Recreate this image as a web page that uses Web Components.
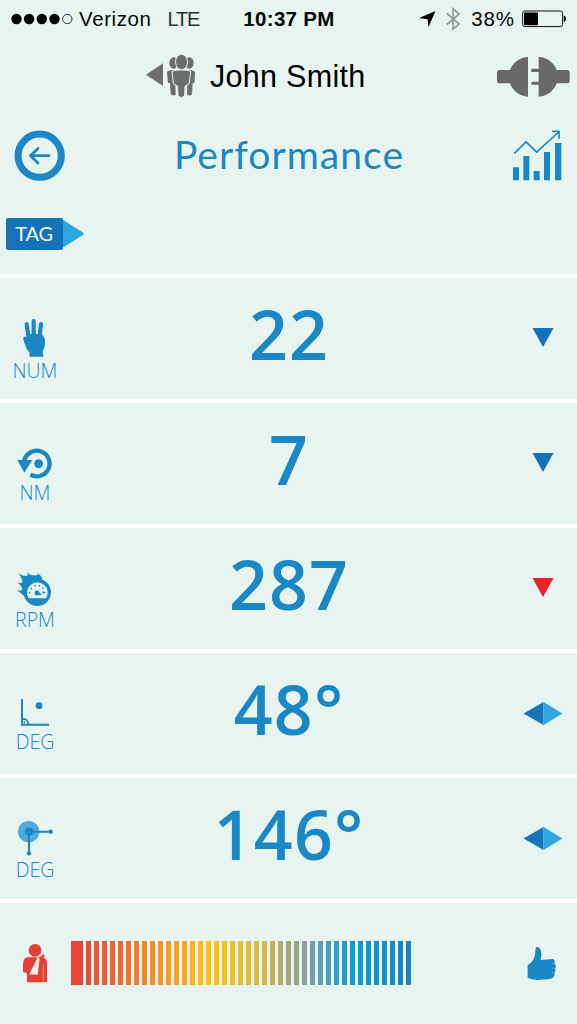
<!DOCTYPE html>
<html lang="en">

<head>
    <meta charset="utf-8">
    <meta name="viewport" content="width=device-width, initial-scale=1">
    <title>Performance</title>
</head>

<style>
    body {
        margin: 0;
        background: #e8f4f0;
    }
</style>

<body>
    <performance-screen>
        <status-bar slot="status" carrier="Verizon" network="LTE" time="10:37 PM" battery="38%"></status-bar>
        <user-bar slot="user">John Smith</user-bar>
        <title-bar slot="title">Performance</title-bar>
        <tag-bar slot="tag">TAG</tag-bar>

        <metric-row icon="hand" trend="down" unit="NUM" style="--unit-y: 0px">22</metric-row>
        <metric-row icon="torque" trend="down" unit="NM" style="--unit-y: -3px">7</metric-row>
        <metric-row icon="speed" trend="alert" unit="RPM" style="--unit-y: -1px">287</metric-row>
        <metric-row icon="angle" trend="steady" unit="DEG" style="--unit-y: -4px">48°</metric-row>
        <metric-row icon="joint" trend="steady" unit="DEG" style="--unit-y: -1px">146°</metric-row>

        <health-scale slot="scale" bars="41"></health-scale>
    </performance-screen>
</body>

<!-- Screen -->
<template id="performance-screen-template">
    <style>
        :host {
            display: flex;
            flex-direction: column;
            box-sizing: border-box;
            width: 577px;
            height: 1024px;
            overflow: hidden;
            background: #e8f4f0;
            color: #1a87c7;
            font-family: Lato, "Liberation Sans", sans-serif;
        }
    </style>
    <slot name="status"></slot>
    <slot name="user"></slot>
    <slot name="title"></slot>
    <slot name="tag"></slot>
    <slot></slot>
    <slot name="scale"></slot>
</template>

<!-- Phone status bar -->
<template id="status-bar-template">
    <style>
        :host {
            display: grid;
            grid-template-columns: 1fr auto 1fr;
            align-items: center;
            height: 38px;
            padding: 0 10px 0 11px;
            color: #050808;
            font: 20.5px/38px "Liberation Sans", sans-serif;
        }

        .left, .right {
            display: flex;
            align-items: center;
        }

        .right {
            justify-content: flex-end;
        }

        .network {
            margin-left: 16px;
            font-size: 20px;
            letter-spacing: -1.2px;
            color: #2b3231;
        }

        .carrier {
            margin-left: 6px;
            letter-spacing: 0.6px;
        }

        .time {
            font-weight: bold;
            letter-spacing: 0.3px;
        }

        .battery {
            margin: 0 7px 0 10px;
            letter-spacing: 0.9px;
        }

        svg {
            display: block;
        }
    </style>
    <div class="left">
        <svg width="62" height="12" viewBox="0 0 62 12">
            <circle cx="5.5" cy="6" r="5.2" />
            <circle cx="18.1" cy="6" r="5.2" />
            <circle cx="30.8" cy="6" r="5.2" />
            <circle cx="43.5" cy="6" r="5.2" />
            <circle cx="56.3" cy="6" r="4.7" fill="none" stroke="#222" stroke-width="0.9" />
        </svg>
        <span class="carrier"></span>
        <span class="network"></span>
    </div>
    <span class="time"></span>
    <div class="right">
        <svg width="17" height="18" viewBox="0 0 17 18">
            <path d="M16.5 1 L9.5 17 L8.5 9.3 L0 8 Z" />
        </svg>
        <svg width="16" height="24" viewBox="0 0 16 24" style="margin-left: 9px">
            <path d="M2 6.5 L14 17 L8 22.2 V1.8 L14 7 L2 17.5" fill="none" stroke="#919c9a" stroke-width="1.7" />
        </svg>
        <span class="battery"></span>
        <svg width="45" height="18" viewBox="0 0 45 18">
            <rect x="0.6" y="1" width="40" height="15.6" rx="2.2" fill="none" stroke="#111" stroke-width="1" />
            <rect x="2" y="2.4" width="14" height="12.8" rx="0.8" />
            <path d="M41.8 5.5 Q44 6 44 8.8 Q44 11.6 41.8 12 Z" />
        </svg>
    </div>
</template>

<!-- User picker and device connection -->
<template id="user-bar-template">
    <style>
        :host {
            display: flex;
            align-items: center;
            height: 77px;
            padding: 0 7px 0 146px;
            color: #000;
            font: 30.5px/77px "Liberation Sans", sans-serif;
        }

        .name {
            flex: 1;
            margin-left: 14px;
            letter-spacing: 0.3px;
        }

        svg {
            display: block;
            fill: #6d6e70;
            margin-top: -2px;
        }

        .plug {
            fill: #69686a;
            margin-top: 1px;
        }
    </style>
    <svg width="50" height="44" viewBox="438 160 150 132">
        <path d="M438 222 L489 188 V256 Z" />
        <!-- the two people behind -->
        <ellipse cx="521" cy="187" rx="13" ry="17" />
        <ellipse cx="568" cy="187" rx="13" ry="17" />
        <path d="M501 213 Q510 206 525 209 L527 282 Q519 287 512 281 L510 248 Q503 248 503 240 Z" />
        <path d="M585 213 Q576 206 563 209 L561 282 Q569 287 576 281 L578 248 Q584 248 584 240 Z" />
        <g stroke="#e8f4f0" stroke-width="3">
            <ellipse cx="544.500" cy="184" rx="18" ry="23" />
            <path d="M516 212 Q527 207 544 208 Q561 207 572 212 L568 247 Q566 254 560 253 L555 257 L554 286 Q544 295 534 286 L533 257 L528 253 Q522 254 520 247 Z" />
        </g>
    </svg>
    <span class="name"><slot></slot></span>
    <svg class="plug" width="73" height="40" viewBox="631 173 219 120">
        <path d="M724 173 V292 A60 60 0 0 1 670 252 H639 Q631 252 631 244 V220 Q631 212 639 212 H670 A60 60 0 0 1 724 173 Z" />
        <path d="M756 173 V292 A60 60 0 0 0 810 252 H841 Q849 252 849 244 V220 Q849 212 841 212 H810 A60 60 0 0 0 756 173 Z" />
        <path d="M735 208.500 H758 V218 H735 Q732 213 735 208.500 Z M735 247 H758 V256.500 H735 Q732 252 735 247 Z" />
    </svg>
</template>

<!-- Page title -->
<template id="title-bar-template">
    <style>
        :host {
            display: flex;
            align-items: center;
            justify-content: space-between;
            height: 80px;
            padding: 0 15px 0 14px;
            font-size: 39px;
            line-height: 78px;
            letter-spacing: 1.05px;
        }

        span {
            height: 80px;
        }

        svg {
            display: block;
            overflow: visible;
        }
    </style>
    <svg width="51" height="51" viewBox="0 0 51 51" fill="none" stroke="#1a87c7">
        <circle cx="25.700" cy="25.700" r="21.600" stroke-width="7" />
        <path d="M35 25.700 H16.500 M24 18.500 L16.500 25.700 L24 33" stroke-width="2.800" stroke-linecap="round" stroke-linejoin="round" />
    </svg>
    <span><slot></slot></span>
    <svg width="49" height="51" viewBox="678 43 147 153" fill="#1a87c7">
        <path d="M678 155 H696 V194 H678 Z M709 121 H727 V194 H709 Z M740 166 H758 V194 H740 Z M771 109 H789 V194 H771 Z M804 82 H823 V194 H804 Z" />
        <path d="M682 113 L717 79 L749 109 L815 49 M795 47 H816 V69" fill="none" stroke="#1a87c7" stroke-width="5" />
    </svg>
</template>

<!-- Tag button -->
<template id="tag-bar-template">
    <style>
        :host {
            display: flex;
            align-items: center;
            height: 79px;
            padding-left: 6px;
        }

        .tag {
            width: 56px;
            height: 32px;
            padding-right: 1px;
            border-radius: 2px;
            background: #1673ba;
            color: #f3fbfd;
            font-size: 20px;
            line-height: 31px;
            letter-spacing: -0.2px;
            text-align: center;
        }

        svg {
            display: block;
        }
    </style>
    <div class="tag"><slot></slot></div>
    <svg width="21" height="28" viewBox="0 0 21 28">
        <path d="M0 0 L20 12.500 Q21.500 13.800 20 15 L0 27.500 Z" fill="#2ca8e1" />
    </svg>
</template>

<!-- One measured value -->
<template id="metric-row-template">
    <style>
        :host {
            display: grid;
            grid-template-columns: 70px 1fr 69px;
            box-sizing: border-box;
            height: 125.1px;
            border-top: 4px solid #fff;
        }

        .kind {
            display: flex;
            flex-direction: column;
            align-items: center;
            padding-top: 36px;
        }

        .unit {
            margin-top: var(--unit-y, 0);
            font-family: "Open Sans", Lato, sans-serif;
            font-weight: 300;
            font-size: 19.5px;
            line-height: 18px;
        }

        .value {
            padding-top: 6px;
            font-family: "Open Sans", Lato, sans-serif;
            font-size: 68px;
            line-height: 100px;
            font-weight: 650;
            letter-spacing: 1.2px;
            text-align: center;
        }

        .trend {
            display: flex;
            justify-content: center;
            align-items: flex-start;
            padding-top: 48px;
        }
    </style>
    <div class="kind">
        <metric-icon></metric-icon>
        <span class="unit"></span>
    </div>
    <div class="value"><slot></slot></div>
    <div class="trend"></div>
</template>

<!-- Red to blue scale -->
<template id="health-scale-template">
    <style>
        :host {
            display: flex;
            align-items: center;
            box-sizing: border-box;
            height: 125px;
            border-top: 4px solid #fff;
            padding: 0 20px 0 23px;
        }

        .bars {
            display: flex;
            flex: 1;
            gap: 2.7px;
            height: 44px;
            margin-left: 24px;
        }

        .bars i {
            width: 5.32px;
        }

        .bars i:first-child {
            width: 12px;
        }

        svg {
            display: block;
        }
    </style>
    <svg width="24" height="39" viewBox="69 403 72 117" fill="#e83f35">
        <circle cx="105" cy="422" r="19" />
        <path d="M82 443 H128 Q141 446 141 462 V518 H81 V491 L69 486 V462 Q70 446 82 443 Z" />
        <path d="M88 494 L113 443 L119 447 L113 495 Z" fill="#f5efeb" />
        <path d="M130 462 V518" stroke="#f0b5ae" stroke-width="2" />
        <path d="M118 447 L132 434 M121 442 L134 440" stroke="#e83f35" stroke-width="4" />
    </svg>
    <div class="bars"></div>
    <svg width="30" height="35" viewBox="984 467 90 105" fill="#1a87c7">
        <path d="M986 525 Q1002 515 1007 498 Q1009 488 1010 474 Q1013 467 1021 472 Q1028 480 1027 496 L1025 509 L1060 506 Q1069 508 1067 520 Q1073 526 1068 534 Q1072 541 1067 547 Q1069 555 1063 560 Q1060 566 1045 567 L1015 569 Q1000 568 986 563 Z" />
        <path d="M1060 520 H1068 M1061 534 H1069 M1060 547 H1068" stroke="#9fcae0" stroke-width="1.500" />
    </svg>
</template>

<script>
    const BLUE = "#1a87c7"

    // All drawn on a 210 x 144 grid, shown at a third of that
    const ICONS = {
        hand: `
            <path d="M80 30 L86 74 M101 21 V72 M123 30 L118 74" stroke="${BLUE}" stroke-width="12.500" stroke-linecap="round" />
            <path d="M80 60 H124 Q137 70 135 88 Q135 102 128 112 L130 128 H89 L88 115 Q78 106 75 91 Q68 76 71 69 Q76 66 79 70 Z" />`,
        torque: `
            <path d="M73 64 A38.500 38.500 0 1 1 91 107" fill="none" stroke="${BLUE}" stroke-width="13" />
            <path d="M52 63 H97 L73 101 Z" />
            <circle cx="116" cy="74" r="13.500" />`,
        speed: `
            <path d="M51 22 C60 33 68 36 80 36 Q87 32 79 23 Q90 35 108 34 Q118 33 110 26 Q126 33 128 50 L110 70 L80 108 Q70 90 49 78 Q58 82 66 79 Q70 68 50 54 Q58 59 66 56 Q70 46 51 22 Z" />
            <circle cx="112" cy="85" r="41" />
            <path d="M86 103 A31 31 0 1 1 138 103 Z" fill="#e8f4f0" />
            <circle cx="89" cy="86" r="2.500" />
            <circle cx="94" cy="74" r="2.500" />
            <circle cx="105" cy="65" r="2.500" />
            <circle cx="118" cy="65" r="2.500" />
            <circle cx="129" cy="73" r="2.500" />
            <circle cx="111" cy="87" r="7.500" />
            <path d="M108 80 L128 92 L111 93 Z M127 82 L138 85 L129 90 Z" />`,
        angle: `
            <path d="M66 30 V107 H147" fill="none" stroke="${BLUE}" stroke-width="6" />
            <path d="M66 90 Q85 88 85 107" fill="none" stroke="${BLUE}" stroke-width="5" />
            <circle cx="73" cy="100" r="3" />
            <circle cx="117" cy="50" r="10" />`,
        joint: `
            <circle cx="86" cy="53" r="32" fill="#55a8dc" />
            <circle cx="87" cy="53" r="13" />
            <path d="M87 118 V53 H152" fill="none" stroke="${BLUE}" stroke-width="6" />
            <circle cx="152" cy="53" r="6.500" />
            <circle cx="87" cy="118" r="6.500" />`,
    }

    const TRENDS = {
        down: `<svg width="22" height="24" viewBox="0 0 22 24"><path d="M0.500 2 H21.500 L11 21 Z" fill="#1272b9" /></svg>`,
        alert: `<svg width="22" height="24" viewBox="0 0 22 24"><path d="M0.500 2 H21.500 L11 21 Z" fill="#ee2026" /></svg>`,
        steady: `<svg width="40" height="24" viewBox="0 0 40 24">
            <path d="M0.500 12.500 L20.500 1 V24 Z" fill="#1975b9" />
            <path d="M39.500 12.500 L20.500 1 V24 Z" fill="#2fa6dc" />
        </svg>`,
    }

    // [bar index, r, g, b]
    const SCALE_STOPS = [
        [0, 233, 68, 55],
        [7, 241, 124, 43],
        [12, 249, 164, 33],
        [16, 253, 193, 16],
        [20, 234, 190, 40],
        [23, 214, 184, 68],
        [26, 163, 167, 124],
        [28, 140, 160, 160],
        [31, 76, 158, 190],
        [34, 12, 153, 215],
        [37, 12, 148, 214],
        [41, 27, 130, 196],
    ]

    function scaleColor(i) {
        const n = SCALE_STOPS.findIndex((s) => s[0] >= i)
        if (n <= 0) return `rgb(${SCALE_STOPS[0].slice(1)})`
        const a = SCALE_STOPS[n - 1]
        const b = SCALE_STOPS[n]
        const t = (i - a[0]) / (b[0] - a[0])
        return `rgb(${[1, 2, 3].map((k) => Math.round(a[k] + (b[k] - a[k]) * t))})`
    }

    class TemplateElement extends HTMLElement {
        constructor() {
            super()
            const template = document.querySelector(`#${this.localName}-template`)
            this.attachShadow({ mode: "open" })
            this.shadowRoot.appendChild(template.content.cloneNode(true))
        }
    }

    class MetricIcon extends HTMLElement {
        static observedAttributes = ["name"]

        constructor() {
            super()
            this.attachShadow({ mode: "open" })
        }

        attributeChangedCallback() {
            this.shadowRoot.innerHTML = `
                <style>
                    :host { display: block; width: 70px; height: 48px; }
                    svg { display: block; }
                </style>
                <svg width="70" height="48" viewBox="0 0 210 144" fill="${BLUE}">${ICONS[this.getAttribute("name")]}</svg>`
        }
    }

    class StatusBar extends TemplateElement {
        connectedCallback() {
            for (const name of ["carrier", "network", "time", "battery"]) {
                this.shadowRoot.querySelector(`.${name}`).textContent = this.getAttribute(name)
            }
        }
    }

    class MetricRow extends TemplateElement {
        connectedCallback() {
            const root = this.shadowRoot
            root.querySelector("metric-icon").setAttribute("name", this.getAttribute("icon"))
            root.querySelector(".unit").textContent = this.getAttribute("unit")
            root.querySelector(".trend").innerHTML = TRENDS[this.getAttribute("trend")]
        }
    }

    class HealthScale extends TemplateElement {
        connectedCallback() {
            const bars = this.shadowRoot.querySelector(".bars")
            // the wide end bar comes on top of the counted ones
            for (let i = 0; i <= Number(this.getAttribute("bars")); i++) {
                const bar = document.createElement("i")
                bar.style.background = scaleColor(i)
                bars.appendChild(bar)
            }
        }
    }

    customElements.define("metric-icon", MetricIcon)
    customElements.define("performance-screen", class extends TemplateElement { })
    customElements.define("status-bar", StatusBar)
    customElements.define("user-bar", class extends TemplateElement { })
    customElements.define("title-bar", class extends TemplateElement { })
    customElements.define("tag-bar", class extends TemplateElement { })
    customElements.define("metric-row", MetricRow)
    customElements.define("health-scale", HealthScale)
</script>

</html>
